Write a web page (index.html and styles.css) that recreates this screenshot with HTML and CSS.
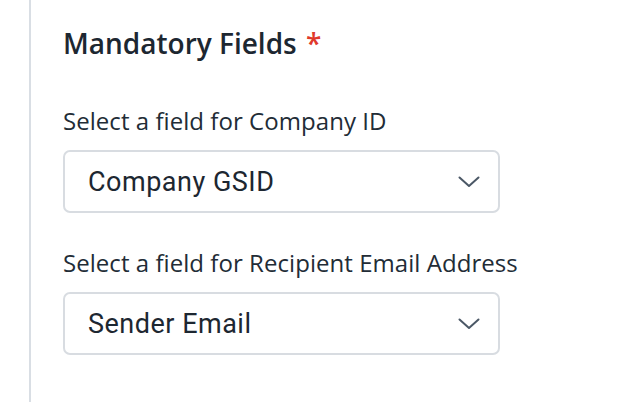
FILE: index.html
```html
<!DOCTYPE html>
<html>
	<head>
		<meta charset="utf-8">
		<title>Mandatory Fields</title>
		<link rel="stylesheet" href="styles.css">
	</head>
	<body>

		<div class="panel">
			<h2 class="title">Mandatory Fields <span class="req">*</span></h2>

			<div class="field">
				<label class="label">Select a field for Company ID</label>
				<div class="select">
					<span class="value">Company GSID</span>
					<svg class="chevron" width="22" height="12" viewBox="0 0 22 12">
						<path d="M1.5 1.5 L11 10 L20.5 1.5" fill="none" stroke="#4b5866" stroke-width="2" stroke-linecap="round" stroke-linejoin="round"/>
					</svg>
				</div>
			</div>

			<div class="field">
				<label class="label">Select a field for Recipient Email Address</label>
				<div class="select">
					<span class="value">Sender Email</span>
					<svg class="chevron" width="22" height="12" viewBox="0 0 22 12">
						<path d="M1.5 1.5 L11 10 L20.5 1.5" fill="none" stroke="#4b5866" stroke-width="2" stroke-linecap="round" stroke-linejoin="round"/>
					</svg>
				</div>
			</div>
		</div>

	</body>
</html>
```

FILE: styles.css
```css
* {
	margin: 0;
	padding: 0;
	box-sizing: border-box;
}

body {
	background-color: #fff;
	font-family: "Open Sans", "Noto Sans", sans-serif;
	color: #1f2933;
}

.panel {
	margin-left: 29px;
	min-height: 402px;
	border-left: 2px solid #d9dee4;
	padding: 25px 0 0 32px;
}

.title {
	font-size: 28px;
	font-weight: 600;
	line-height: 36px;
	color: #1d2731;
}

.title .req {
	margin-left: 2px;
	color: #e0392b;
}

.field {
	margin-top: 44px;
}

.field + .field {
	margin-top: 34px;
}

.label {
	display: block;
	font-size: 24px;
	line-height: 32px;
	letter-spacing: 0.05px;
	color: #222c36;
}

.select {
	display: flex;
	align-items: center;
	justify-content: space-between;
	width: 437px;
	height: 63px;
	margin-top: 13px;
	padding: 0 18px 0 23px;
	border: 2px solid #d8dce1;
	border-radius: 7px;
}

.select .value {
	font-family: Roboto, "Liberation Sans", sans-serif;
	font-size: 27px;
	letter-spacing: 0.5px;
	color: #1d2731;
}

.chevron {
	display: block;
}
```
